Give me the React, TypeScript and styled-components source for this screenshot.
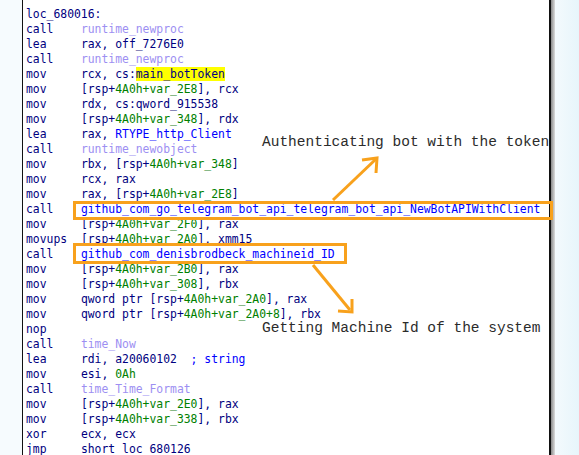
import React from 'react';
import styled, { createGlobalStyle } from 'styled-components';

type Kind = 'n' | 'g' | 'f' | 'b' | 'h';
type Row = { op?: string; label?: string; parts?: [Kind, string][] };

const rows: Row[] = [
  { label: 'loc_680016:' },
  { op: 'call', parts: [['f', 'runtime_newproc']] },
  { op: 'lea', parts: [['n', 'rax, off_7276E0']] },
  { op: 'call', parts: [['f', 'runtime_newproc']] },
  { op: 'mov', parts: [['n', 'rcx, cs:'], ['h', 'main_botToken']] },
  { op: 'mov', parts: [['n', '[rsp+'], ['g', '4A0h+var_2E8'], ['n', '], rcx']] },
  { op: 'mov', parts: [['n', 'rdx, cs:qword_915538']] },
  { op: 'mov', parts: [['n', '[rsp+'], ['g', '4A0h+var_348'], ['n', '], rdx']] },
  { op: 'lea', parts: [['n', 'rax, '], ['b', 'RTYPE_http_Client']] },
  { op: 'call', parts: [['f', 'runtime_newobject']] },
  { op: 'mov', parts: [['n', 'rbx, [rsp+'], ['g', '4A0h+var_348'], ['n', ']']] },
  { op: 'mov', parts: [['n', 'rcx, rax']] },
  { op: 'mov', parts: [['n', 'rax, [rsp+'], ['g', '4A0h+var_2E8'], ['n', ']']] },
  { op: 'call', parts: [['b', 'github_com_go_telegram_bot_api_telegram_bot_api_NewBotAPIWithClient']] },
  { op: 'mov', parts: [['n', '[rsp+'], ['g', '4A0h+var_2F0'], ['n', '], rax']] },
  { op: 'movups', parts: [['n', '[rsp+'], ['g', '4A0h+var_2A0'], ['n', '], xmm15']] },
  { op: 'call', parts: [['b', 'github_com_denisbrodbeck_machineid_ID']] },
  { op: 'mov', parts: [['n', '[rsp+'], ['g', '4A0h+var_2B0'], ['n', '], rax']] },
  { op: 'mov', parts: [['n', '[rsp+'], ['g', '4A0h+var_308'], ['n', '], rbx']] },
  { op: 'mov', parts: [['n', 'qword ptr [rsp+'], ['g', '4A0h+var_2A0'], ['n', '], rax']] },
  { op: 'mov', parts: [['n', 'qword ptr [rsp+'], ['g', '4A0h+var_2A0+8'], ['n', '], rbx']] },
  { op: 'nop' },
  { op: 'call', parts: [['f', 'time_Now']] },
  { op: 'lea', parts: [['n', 'rdi, a20060102  '], ['b', '; string']] },
  { op: 'mov', parts: [['n', 'esi, '], ['g', '0Ah']] },
  { op: 'call', parts: [['f', 'time_Time_Format']] },
  { op: 'mov', parts: [['n', '[rsp+'], ['g', '4A0h+var_2E0'], ['n', '], rax']] },
  { op: 'mov', parts: [['n', '[rsp+'], ['g', '4A0h+var_338'], ['n', '], rbx']] },
  { op: 'xor', parts: [['n', 'ecx, ecx']] },
  { op: 'jmp', parts: [['n', 'short loc_680126']] },
];

const colors: Record<Kind, string> = {
  n: '#000080',
  g: '#008000',
  f: '#9d8ff2',
  b: '#0000ff',
  h: '#000080',
};

const ORANGE = '#f8a11c';

export default function App() {
  return (
    <>
      <GlobalStyle />
      <Page>
        <Gutter />
        <Panel>
          {rows.map((r, i) => (
            <Line key={i}>
              {r.label ? (
                <Tok $kind='n'>{r.label}</Tok>
              ) : (
                <>
                  <Tok $kind='n'>{(r.op || '').padEnd(8, ' ')}</Tok>
                  {r.parts?.map(([k, t], j) => (
                    <Tok key={j} $kind={k}>{t}</Tok>
                  ))}
                </>
              )}
            </Line>
          ))}
        </Panel>
        <Shadow />
        <SideArea />

        <Frame $x={73} $y={201} $w={480} $h={19} />
        <Frame $x={73} $y={243} $w={274} $h={21} />
        <Arrows width='579' height='455' viewBox='0 0 579 455'>
          <g stroke={ORANGE} strokeWidth='3' fill='none'>
            <line x1='333' y1='200' x2='376' y2='159' />
            <polyline points='362,160 377,158 376,173' />
            <line x1='313' y1='265' x2='350' y2='310' />
            <polyline points='338,311 352,312 352,299' />
          </g>
        </Arrows>
        <Note $y={136}>Authenticating bot with the token</Note>
        <Note $y={322}>Getting Machine Id of the system</Note>
      </Page>
    </>
  );
}

const GlobalStyle = createGlobalStyle`
  body {
    margin: 0;
    background: #fff;
  }
`;

const Page = styled.div`
  position: relative;
  display: flex;
  width: 579px;
  height: 455px;
  overflow: hidden;
`;

const Gutter = styled.div`
  width: 22px;
  background: #f6fbfe;
`;

const Panel = styled.div`
  width: 529px;
  padding: 7px 0 0 3px;
  box-sizing: border-box;
  background: #fff;
  border-left: 1px solid #111;
  border-right: 2px solid #111;
  font-family: 'DejaVu Sans Mono', 'Liberation Mono', monospace;
  font-size: 11.4px;
  line-height: 15px;
  white-space: pre;
`;

const Line = styled.div`
  height: 15px;
`;

const Tok = styled.span<{ $kind: Kind }>`
  color: ${(p) => colors[p.$kind]};
  background: ${(p) => (p.$kind === 'h' ? '#ffff00' : 'transparent')};
`;

const Shadow = styled.div`
  width: 4px;
  background: linear-gradient(to right, #8a8a8a, #dcdcdc);
`;

const SideArea = styled.div`
  flex: 1;
  background: linear-gradient(to right, #f4fafd, #e7f5fb);
`;

const Frame = styled.div<{ $x: number; $y: number; $w: number; $h: number }>`
  position: absolute;
  left: ${(p) => p.$x}px;
  top: ${(p) => p.$y}px;
  width: ${(p) => p.$w}px;
  height: ${(p) => p.$h}px;
  box-sizing: border-box;
  border: 3px solid ${ORANGE};
`;

const Arrows = styled.svg`
  position: absolute;
  left: 0;
  top: 0;
  pointer-events: none;
`;

const Note = styled.div<{ $y: number }>`
  position: absolute;
  left: 262px;
  top: ${(p) => p.$y}px;
  font-family: 'Liberation Mono', 'DejaVu Sans Mono', monospace;
  font-size: 14.5px;
  line-height: 13px;
  color: #2b2b2b;
  white-space: pre;
`;
